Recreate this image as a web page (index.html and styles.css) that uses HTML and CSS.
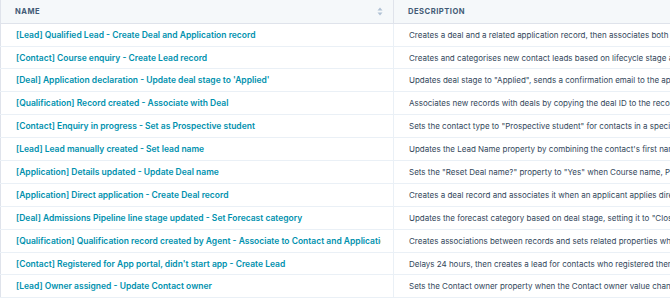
FILE: index.html
```html
<!DOCTYPE html>
<html>
<head>
  <meta charset="utf-8">
  <title>Workflows</title>
  <link rel="stylesheet" href="styles.css">
</head>
<body>
  <table class="wf-table">
    <colgroup>
      <col class="col-name">
      <col class="col-desc">
    </colgroup>
    <thead>
      <tr>
        <th>
          <div class="th-inner">
            <span>Name</span>
            <svg class="sort" width="6" height="9" viewBox="0 0 6 9">
              <path d="M3 0.5 L5.5 3.5 H0.5 Z" fill="#b0c1d4"/>
              <path d="M3 8.5 L5.5 5.5 H0.5 Z" fill="#b0c1d4"/>
            </svg>
          </div>
        </th>
        <th><div class="th-inner"><span>Description</span></div></th>
      </tr>
    </thead>
    <tbody>
      <tr>
        <td class="name"><a href="#">[Lead] Qualified Lead - Create Deal and Application record</a></td>
        <td class="desc">Creates a deal and a related application record, then associates both with the contact and the lead</td>
      </tr>
      <tr>
        <td class="name"><a href="#">[Contact] Course enquiry - Create Lead record</a></td>
        <td class="desc">Creates and categorises new contact leads based on lifecycle stage and enquiry source</td>
      </tr>
      <tr>
        <td class="name"><a href="#">[Deal] Application declaration - Update deal stage to 'Applied'</a></td>
        <td class="desc">Updates deal stage to "Applied", sends a confirmation email to the applicant and notifies the owner</td>
      </tr>
      <tr>
        <td class="name"><a href="#">[Qualification] Record created - Associate with Deal</a></td>
        <td class="desc">Associates new records with deals by copying the deal ID to the record</td>
      </tr>
      <tr>
        <td class="name"><a href="#">[Contact] Enquiry in progress - Set as Prospective student</a></td>
        <td class="desc">Sets the contact type to "Prospective student" for contacts in a specific lifecycle stage</td>
      </tr>
      <tr>
        <td class="name"><a href="#">[Lead] Lead manually created - Set lead name</a></td>
        <td class="desc">Updates the Lead Name property by combining the contact's first name and last name</td>
      </tr>
      <tr>
        <td class="name"><a href="#">[Application] Details updated - Update Deal name</a></td>
        <td class="desc">Sets the "Reset Deal name?" property to "Yes" when Course name, Preferred start date changes</td>
      </tr>
      <tr>
        <td class="name"><a href="#">[Application] Direct application - Create Deal record</a></td>
        <td class="desc">Creates a deal record and associates it when an applicant applies directly</td>
      </tr>
      <tr>
        <td class="name"><a href="#">[Deal] Admissions Pipeline line stage updated - Set Forecast category</a></td>
        <td class="desc">Updates the forecast category based on deal stage, setting it to "Closed won" or "Pipeline"</td>
      </tr>
      <tr>
        <td class="name"><a href="#">[Qualification] Qualification record created by Agent - Associate to Contact and Application</a></td>
        <td class="desc">Creates associations between records and sets related properties when an agent submits</td>
      </tr>
      <tr>
        <td class="name"><a href="#">[Contact] Registered for App portal, didn't start app - Create Lead</a></td>
        <td class="desc">Delays 24 hours, then creates a lead for contacts who registered themselves on the portal</td>
      </tr>
      <tr>
        <td class="name"><a href="#">[Lead] Owner assigned - Update Contact owner</a></td>
        <td class="desc">Sets the Contact owner property when the Contact owner value changes on the lead</td>
      </tr>
    </tbody>
  </table>
</body>
</html>
```

FILE: styles.css
```css
body {
  margin: 0;
  overflow: hidden;
  background: #fff;
  font-family: "Inter", "Noto Sans", sans-serif;
  color: #33475b;
}

/* table */
.wf-table {
  width: 940px;
  table-layout: fixed;
  border-collapse: collapse;
  border-left: 1px solid #dfe3eb;
}

.col-name {
  width: 393px;
}

.wf-table th {
  height: 22.7px;
  padding: 0;
  background: #f5f8fa;
  border-bottom: 1px solid #dfe3eb;
  border-right: 1px solid #dfe3eb;
  text-align: left;
  font-size: 7.6px;
  font-weight: 700;
  letter-spacing: 0.5px;
  text-transform: uppercase;
  color: #425b76;
}

.th-inner {
  display: flex;
  align-items: center;
  justify-content: space-between;
  padding: 0 10px 0 14px;
}

.sort {
  display: block;
}

.wf-table td {
  height: 21.9px;
  padding: 0 12px 0 15px;
  border-bottom: 1px solid #eaf0f6;
  border-right: 1px solid #eaf0f6;
  white-space: nowrap;
  overflow: hidden;
}

.name a {
  display: block;
  overflow: hidden;
  color: #0091ae;
  font-size: 8.5px;
  font-weight: 600;
  text-decoration: none;
}

.desc {
  color: #33475b;
  font-size: 8px;
}
```
